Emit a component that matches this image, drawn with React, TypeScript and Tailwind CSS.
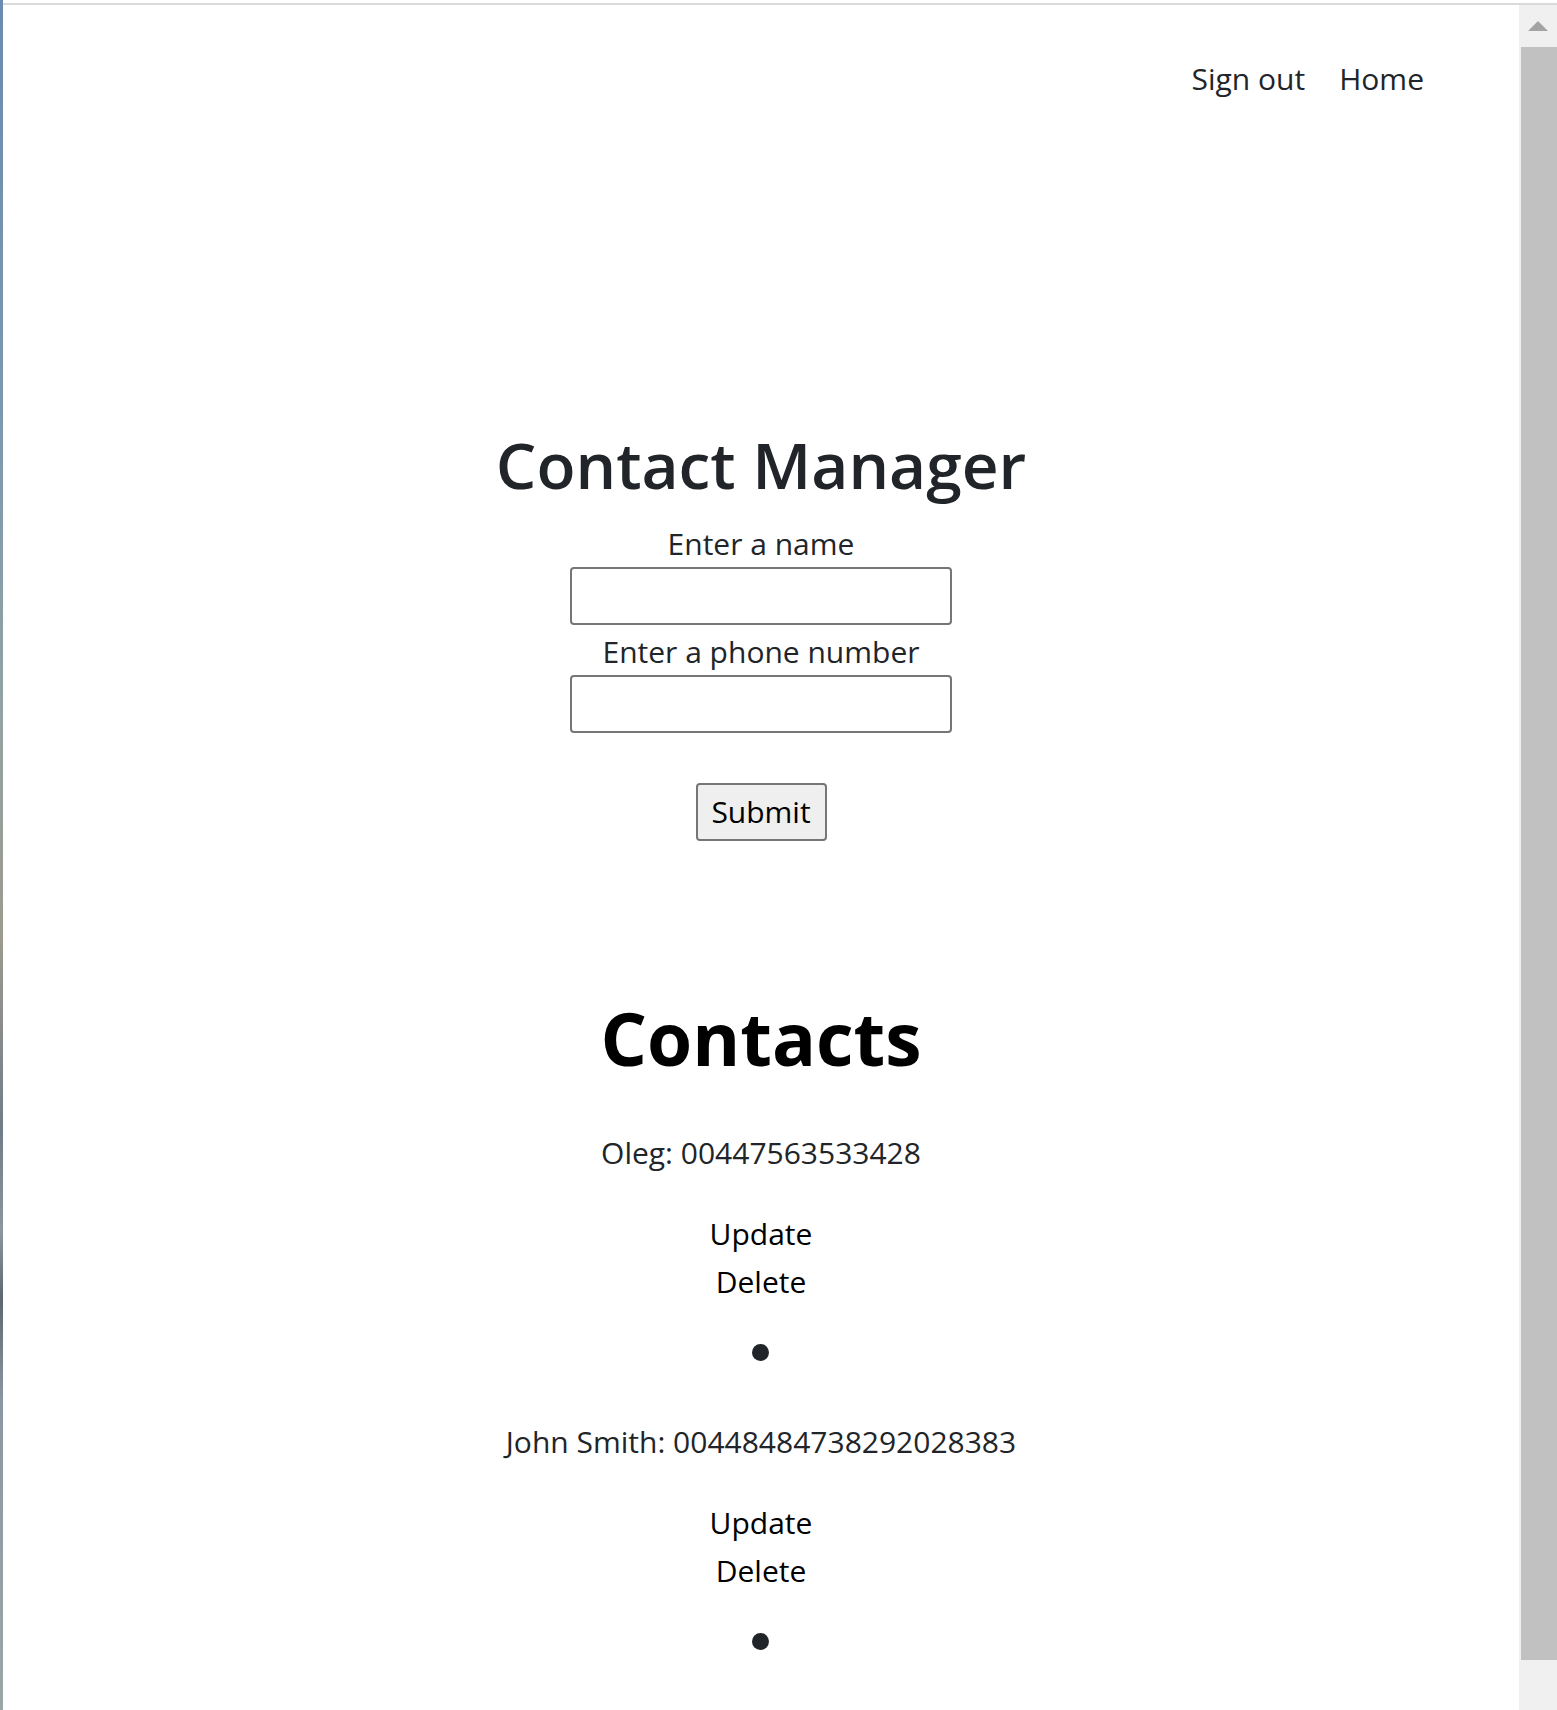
import React from "react";

type Contact = { name: string; phone: string };

const contacts: Contact[] = [
  { name: "Oleg", phone: "00447563533428" },
  { name: "John Smith", phone: "00448484738292028383" },
];

function ContactItem({ c, first }: { c: Contact; first: boolean }) {
  return (
    <li className={`flex flex-col items-center ${first ? "mt-[50px]" : "mt-[61px]"}`}>
      <p className="leading-[40px] text-[30px] text-[#212529]">
        {c.name}: {c.phone}
      </p>
      <button className="mt-[37px] leading-[48px] text-[30px] text-black">Update</button>
      <button className="leading-[48px] text-[30px] text-black">Delete</button>
      <span className="mt-[38px] block w-[17px] h-[17px] rounded-full bg-[#212529]" />
    </li>
  );
}

export default function App() {
  return (
    <div className="h-[1710px] w-full flex overflow-hidden bg-white font-[family-name:'Open_Sans',sans-serif] text-[#212529]">
      <div className="w-[3px] shrink-0 h-full bg-[linear-gradient(180deg,#6a8cb0_0%,#7e98ae_25%,#93a3a3_42%,#9c9a8e_55%,#8a8c8c_60%,#6f7d88_66%,#8a96a0_72%,#5e6770_76%,#8a98a4_82%,#9ba6a6_100%)]" />
      <div className="flex-1 flex flex-col">
        <div className="h-[3px] bg-white" />
        <div className="h-[2px] bg-[#dadada]" />
        <div className="flex-1 flex min-h-0">
          <main className="flex-1 flex flex-col">
            <nav className="flex justify-end gap-[34px] pr-[95px] pt-[54px]">
              <a className="leading-[40px] text-[30px] text-[#212529]">Sign out</a>
              <a className="leading-[40px] text-[30px] text-[#212529]">Home</a>
            </nav>
            <div className="flex flex-col items-center">
              <h1 className="mt-[326px] leading-[80px] text-[64px] font-semibold text-[#212529]">
                Contact Manager
              </h1>
              <label className="mt-[19px] leading-[40px] text-[30px]">Enter a name</label>
              <input
                type="text"
                className="mt-[3px] w-[382px] h-[58px] border-2 border-[#767676] rounded-[4px] bg-white"
              />
              <label className="mt-[7px] leading-[40px] text-[30px]">Enter a phone number</label>
              <input
                type="text"
                className="mt-[3px] w-[382px] h-[58px] border-2 border-[#767676] rounded-[4px] bg-white"
              />
              <button className="mt-[50px] w-[131px] h-[58px] border-2 border-[#767676] rounded-[4px] bg-[#efefef] text-black text-[30px] leading-[40px]">
                Submit
              </button>
              <h2 className="mt-[152px] leading-[90px] text-[73px] font-bold text-black">Contacts</h2>
              <ul className="flex flex-col items-center">
                {contacts.map((c, i) => (
                  <ContactItem key={c.name} c={c} first={i === 0} />
                ))}
              </ul>
            </div>
          </main>
          <div className="w-[38px] shrink-0 bg-[#f0f0f0] flex flex-col">
            <div className="h-[42px] flex items-center justify-center">
              <svg width="20" height="10" viewBox="0 0 20 10">
                <polygon points="10,0 20,10 0,10" fill="#a3a3a3" />
              </svg>
            </div>
            <div className="ml-[2px] h-[1613px] bg-[#c1c1c1]" />
          </div>
        </div>
      </div>
    </div>
  );
}
